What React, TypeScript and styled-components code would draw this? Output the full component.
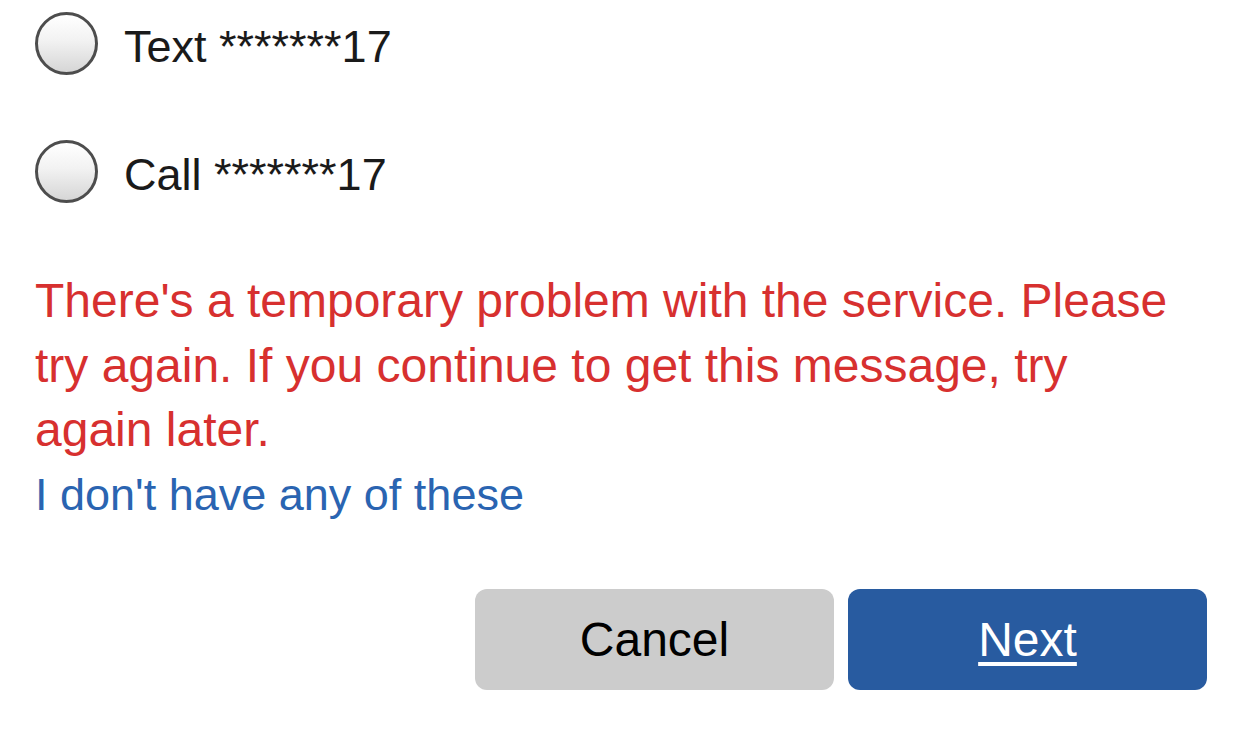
import React, { useState } from 'react';
import styled, { createGlobalStyle } from 'styled-components';

type Option = {
  id: string;
  label: string;
};

const options: Option[] = [
  { id: 'text', label: 'Text *******17' },
  { id: 'call', label: 'Call *******17' },
];

const App = () => {
  const [selected, setSelected] = useState<string | null>(null);

  return (
    <>
      <GlobalStyle />
      <Page>
        <RadioList>
          {options.map((option) => (
            <RadioRow key={option.id} onClick={() => setSelected(option.id)}>
              <RadioCircle checked={selected === option.id} />
              <RadioLabel>{option.label}</RadioLabel>
            </RadioRow>
          ))}
        </RadioList>

        <ErrorText>
          There's a temporary problem with the service. Please try again. If you
          continue to get this message, try again later.
        </ErrorText>

        <HelpLink href='#'>I don't have any of these</HelpLink>

        <ButtonRow>
          <ActionButton variant='secondary'>Cancel</ActionButton>
          <ActionButton variant='primary'>
            <u>Next</u>
          </ActionButton>
        </ButtonRow>
      </Page>
    </>
  );
};
export default App;

const GlobalStyle = createGlobalStyle`
  html, body {
    margin: 0;
    padding: 0;
    background: #ffffff;
  }
  body {
    font-family: 'Liberation Sans', Arial, Helvetica, sans-serif;
  }
`;

const Page = styled.div`
  width: 1242px;
  box-sizing: border-box;
  padding: 12px 35px 0 35px;
  display: flex;
  flex-direction: column;
`;

const RadioList = styled.div`
  display: flex;
  flex-direction: column;
  gap: 65px;
`;

const RadioRow = styled.label`
  height: 63px;
  display: flex;
  align-items: center;
  gap: 26px;
  cursor: pointer;
`;

const RadioCircle = styled.span<{ checked: boolean }>`
  width: 63px;
  height: 63px;
  box-sizing: border-box;
  border-radius: 50%;
  border: 3px solid #4d4d4d;
  background: linear-gradient(to bottom, #ffffff 0%, #f2f2f2 45%, #d6d6d6 100%);
  box-shadow: ${({ checked }) => (checked ? 'inset 0 0 0 14px #ffffff' : 'none')};
  flex-shrink: 0;
`;

const RadioLabel = styled.span`
  font-size: 45px;
  color: #1a1a1a;
  padding-top: 6px;
`;

const ErrorText = styled.p`
  margin: 66px 0 0 0;
  max-width: 1150px;
  font-size: 48px;
  line-height: 64.5px;
  color: #d7302f;
`;

const HelpLink = styled.a`
  font-size: 45px;
  line-height: 64.5px;
  color: #2a64b1;
  text-decoration: none;
  align-self: flex-start;
`;

const ButtonRow = styled.div`
  margin-top: 62px;
  display: flex;
  justify-content: flex-end;
  gap: 14px;
`;

const ActionButton = styled.button<{ variant: 'primary' | 'secondary' }>`
  width: 359px;
  height: 101px;
  border: none;
  border-radius: 12px;
  font-family: 'Liberation Sans', Arial, Helvetica, sans-serif;
  font-size: 48px;
  display: flex;
  align-items: center;
  justify-content: center;
  background-color: ${({ variant }) => (variant === 'primary' ? '#285ba0' : '#cccccc')};
  color: ${({ variant }) => (variant === 'primary' ? '#ffffff' : '#000000')};
  cursor: pointer;

  u {
    text-underline-offset: 6px;
  }
`;
